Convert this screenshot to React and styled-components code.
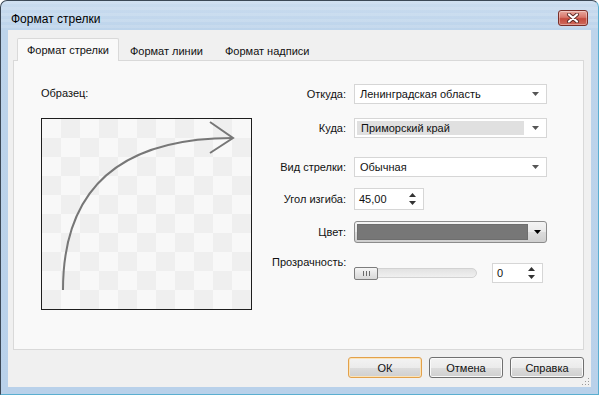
import React from 'react';
import styled, { createGlobalStyle } from 'styled-components';

const GlobalStyle = createGlobalStyle`
  html, body {
    margin: 0;
    padding: 0;
    background: #ffffff;
  }
  body {
    font-family: "Liberation Sans", Arial, sans-serif;
    font-size: 11px;
    color: #111;
  }
  * {
    box-sizing: border-box;
  }
`;

const Window = styled.div`
  width: 599px;
  height: 395px;
  display: flex;
  flex-direction: column;
  border: 1px solid #3c4856;
  border-right-color: #5aaed0;
  border-bottom-color: #5aaed0;
  border-radius: 7px 7px 0 0;
  background: linear-gradient(to bottom, #cadcef 0, #bdd4eb 28px, #b9d1ea 100%);
  overflow: hidden;
`;

const TitleBar = styled.div`
  height: 29px;
  display: flex;
  align-items: flex-start;
  justify-content: space-between;
  padding: 0 10px 0 10px;
  background: repeating-linear-gradient(
    to bottom,
    rgba(255, 255, 255, 0.12) 0,
    rgba(255, 255, 255, 0.12) 3px,
    rgba(0, 0, 0, 0) 3px,
    rgba(0, 0, 0, 0) 6px
  );
`;

const TitleText = styled.span`
  font-size: 12px;
  line-height: 16px;
  margin-top: 10px;
  color: #000;
`;

const CloseButton = styled.div`
  width: 30px;
  height: 16px;
  margin-top: 9px;
  border: 1px solid #7a2e28;
  border-radius: 3px;
  background: linear-gradient(to bottom, #e9a99f 0, #d8776b 45%, #c44b3e 55%, #cf6a5c 100%);
  display: flex;
  align-items: center;
  justify-content: center;
  box-shadow: inset 0 0 0 1px rgba(255, 255, 255, 0.35);
`;

const Client = styled.div`
  flex: 1;
  margin: 0 7px 7px 7px;
  background: #f0f0f0;
  display: flex;
  flex-direction: column;
  padding: 8px 7px 0 5px;
  position: relative;
`;

const TabStrip = styled.div`
  display: flex;
  height: 23px;
  padding-left: 4px;
  margin-bottom: -1px;
  position: relative;
  z-index: 1;
`;

const Tab = styled.div`
  height: 23px;
  padding: ${(p) => (p.active ? '0 9px' : '2px 10px 0 10px')};
  display: flex;
  align-items: center;
  line-height: 16px;
  border: 1px solid ${(p) => (p.active ? '#d9d9d9' : 'transparent')};
  border-bottom: none;
  border-radius: 2px 2px 0 0;
  background: ${(p) => (p.active ? '#f9f9f9' : 'transparent')};
`;

const Page = styled.div`
  height: 290px;
  border: 1px solid #d9d9d9;
  background: #f9f9f9;
  display: flex;
`;

const LeftColumn = styled.div`
  display: flex;
  flex-direction: column;
  padding: 24px 0 0 27px;
`;

const Caption = styled.div`
  line-height: 16px;
`;

const Preview = styled.div`
  margin-top: 17px;
  width: 211px;
  height: 192px;
  border: 1px solid #1e1e1e;
  background: repeating-conic-gradient(#efefef 0 25%, #f8f8f8 0 50%) 0 0 / 38px 38px;
`;

const RightColumn = styled.div`
  margin-left: 20px;
  padding-top: 23px;
  display: flex;
  flex-direction: column;
`;

const Row = styled.div`
  display: flex;
  align-items: ${(p) => (p.top ? 'flex-start' : 'center')};
  margin-top: ${(p) => p.gap || 0}px;
`;

const Label = styled.div`
  width: 74px;
  margin-right: 8px;
  text-align: right;
  line-height: 16px;
  white-space: nowrap;
  margin-top: ${(p) => p.shift || 0}px;
`;

const Combo = styled.div`
  width: 193px;
  height: 20px;
  border: 1px solid #d6d6d6;
  background: #ffffff;
  display: flex;
  align-items: center;
  padding: 2px;
`;

const ComboValue = styled.div`
  flex: 1;
  height: 100%;
  display: flex;
  align-items: center;
  padding-left: ${(p) => (p.selected ? '4px' : '3px')};
  background: ${(p) => (p.selected ? '#e0e0e0' : 'transparent')};
  margin-right: ${(p) => (p.selected ? '2px' : '0')};
`;

const DropArrow = styled.div`
  width: 18px;
  display: flex;
  justify-content: center;
  align-items: center;
`;

const Spin = styled.div`
  width: ${(p) => p.width}px;
  height: ${(p) => p.height}px;
  border: 1px solid #d6d6d6;
  background: #ffffff;
  display: flex;
  align-items: center;
  justify-content: space-between;
  padding: 0 7px 0 4px;
`;

const SpinArrows = styled.div`
  display: flex;
  flex-direction: column;
  gap: 4px;
`;

const ColorCombo = styled.div`
  width: 193px;
  height: 22px;
  border: 1px solid #8c8c8c;
  border-radius: 3px;
  background: linear-gradient(to bottom, #f4f4f4 0, #e9e9e9 50%, #dcdcdc 51%, #cfcfcf 100%);
  display: flex;
  align-items: stretch;
  padding: 2px 0 2px 2px;
`;

const Swatch = styled.div`
  flex: 1;
  background: #777777;
  border: 1px solid #6e6e6e;
`;

const ColorDrop = styled.div`
  width: 18px;
  display: flex;
  align-items: center;
  justify-content: center;
`;

const SliderBox = styled.div`
  position: relative;
  width: 123px;
  height: 12px;
  margin-top: 5px;
  margin-right: 15px;
`;

const Track = styled.div`
  height: 10px;
  border: 1px solid #d2d2d2;
  border-radius: 0 5px 5px 0;
  background: linear-gradient(to bottom, #e2e2e2, #f0f0f0);
`;

const Thumb = styled.div`
  position: absolute;
  left: 0;
  top: -1px;
  width: 24px;
  height: 13px;
  border: 1px solid #7d7d7d;
  border-radius: 2px;
  background: linear-gradient(to bottom, #f6f6f6 0, #e6e6e6 50%, #d8d8d8 100%);
  display: flex;
  align-items: center;
  justify-content: center;
  gap: 2px;
`;

const Grip = styled.span`
  width: 1px;
  height: 5px;
  background: #6a6a6a;
`;

const ButtonRow = styled.div`
  display: flex;
  justify-content: flex-end;
  gap: 7px;
  margin-top: 7px;
`;

const Button = styled.div`
  width: 74px;
  height: 21px;
  border: 1px solid ${(p) => (p.primary ? '#e3a14a' : '#707070')};
  border-radius: 3px;
  background: linear-gradient(to bottom, #f3f3f3 0, #ebebeb 50%, #dddddd 51%, #cfcfcf 100%);
  box-shadow: inset 0 0 0 1px ${(p) => (p.primary ? '#fbe3b8' : '#fafafa')};
  display: flex;
  align-items: center;
  justify-content: center;
  line-height: 16px;
`;

const SizeGrip = styled.svg`
  position: absolute;
  right: 1px;
  bottom: 1px;
`;

const Down = ({ color = '#555' }) => (
  <svg width="7" height="4" viewBox="0 0 7 4">
    <path d="M0 0 H7 L3.5 4 Z" fill={color} />
  </svg>
);

const Up = ({ color = '#555' }) => (
  <svg width="7" height="4" viewBox="0 0 7 4">
    <path d="M0 4 H7 L3.5 0 Z" fill={color} />
  </svg>
);

const Combobox = ({ value, selected }) => (
  <Combo>
    <ComboValue selected={selected}>{value}</ComboValue>
    <DropArrow>
      <Down />
    </DropArrow>
  </Combo>
);

const SpinBox = ({ value, width, height }) => (
  <Spin width={width} height={height}>
    <span>{value}</span>
    <SpinArrows>
      <Up color="#333" />
      <Down color="#333" />
    </SpinArrows>
  </Spin>
);

export default function App() {
  return (
    <>
      <GlobalStyle />
      <Window>
        <TitleBar>
          <TitleText>Формат стрелки</TitleText>
          <CloseButton>
            <svg width="14" height="10" viewBox="0 0 14 10">
              <path d="M3 1.5 L11 8.5 M11 1.5 L3 8.5" stroke="#5a2a26" strokeWidth="4" strokeLinecap="round" />
              <path d="M3 1.5 L11 8.5 M11 1.5 L3 8.5" stroke="#ffffff" strokeWidth="2.2" strokeLinecap="round" />
            </svg>
          </CloseButton>
        </TitleBar>
        <Client>
          <TabStrip>
            <Tab active>Формат стрелки</Tab>
            <Tab>Формат линии</Tab>
            <Tab>Формат надписи</Tab>
          </TabStrip>
          <Page>
            <LeftColumn>
              <Caption>Образец:</Caption>
              <Preview>
                <svg width="209" height="190" viewBox="0 0 209 190">
                  <path d="M21 171 Q21 19 191 19" fill="none" stroke="#777" strokeWidth="2" />
                  <path d="M168 3 L191 19 L168 34" fill="none" stroke="#777" strokeWidth="2" />
                </svg>
              </Preview>
            </LeftColumn>
            <RightColumn>
              <Row>
                <Label>Откуда:</Label>
                <Combobox value="Ленинградская область" />
              </Row>
              <Row gap={14}>
                <Label>Куда:</Label>
                <Combobox value="Приморский край" selected />
              </Row>
              <Row gap={19}>
                <Label>Вид стрелки:</Label>
                <Combobox value="Обычная" />
              </Row>
              <Row gap={11}>
                <Label>Угол изгиба:</Label>
                <SpinBox value="45,00" width={70} height={22} />
              </Row>
              <Row gap={11}>
                <Label>Цвет:</Label>
                <ColorCombo>
                  <Swatch />
                  <ColorDrop>
                    <Down color="#000" />
                  </ColorDrop>
                </ColorCombo>
              </Row>
              <Row gap={20} top>
                <Label shift={-9}>Прозрачность:</Label>
                <SliderBox>
                  <Track />
                  <Thumb>
                    <Grip />
                    <Grip />
                    <Grip />
                  </Thumb>
                </SliderBox>
                <SpinBox value="0" width={51} height={20} />
              </Row>
            </RightColumn>
          </Page>
          <ButtonRow>
            <Button primary>ОК</Button>
            <Button>Отмена</Button>
            <Button>Справка</Button>
          </ButtonRow>
          <SizeGrip width="8" height="8" viewBox="0 0 8 8">
            <rect x="6" y="0" width="1" height="1" fill="#9a9a9a" />
            <rect x="3" y="3" width="1" height="1" fill="#9a9a9a" />
            <rect x="6" y="3" width="1" height="1" fill="#9a9a9a" />
            <rect x="0" y="6" width="1" height="1" fill="#9a9a9a" />
            <rect x="3" y="6" width="1" height="1" fill="#9a9a9a" />
            <rect x="6" y="6" width="1" height="1" fill="#9a9a9a" />
          </SizeGrip>
        </Client>
      </Window>
    </>
  );
}
